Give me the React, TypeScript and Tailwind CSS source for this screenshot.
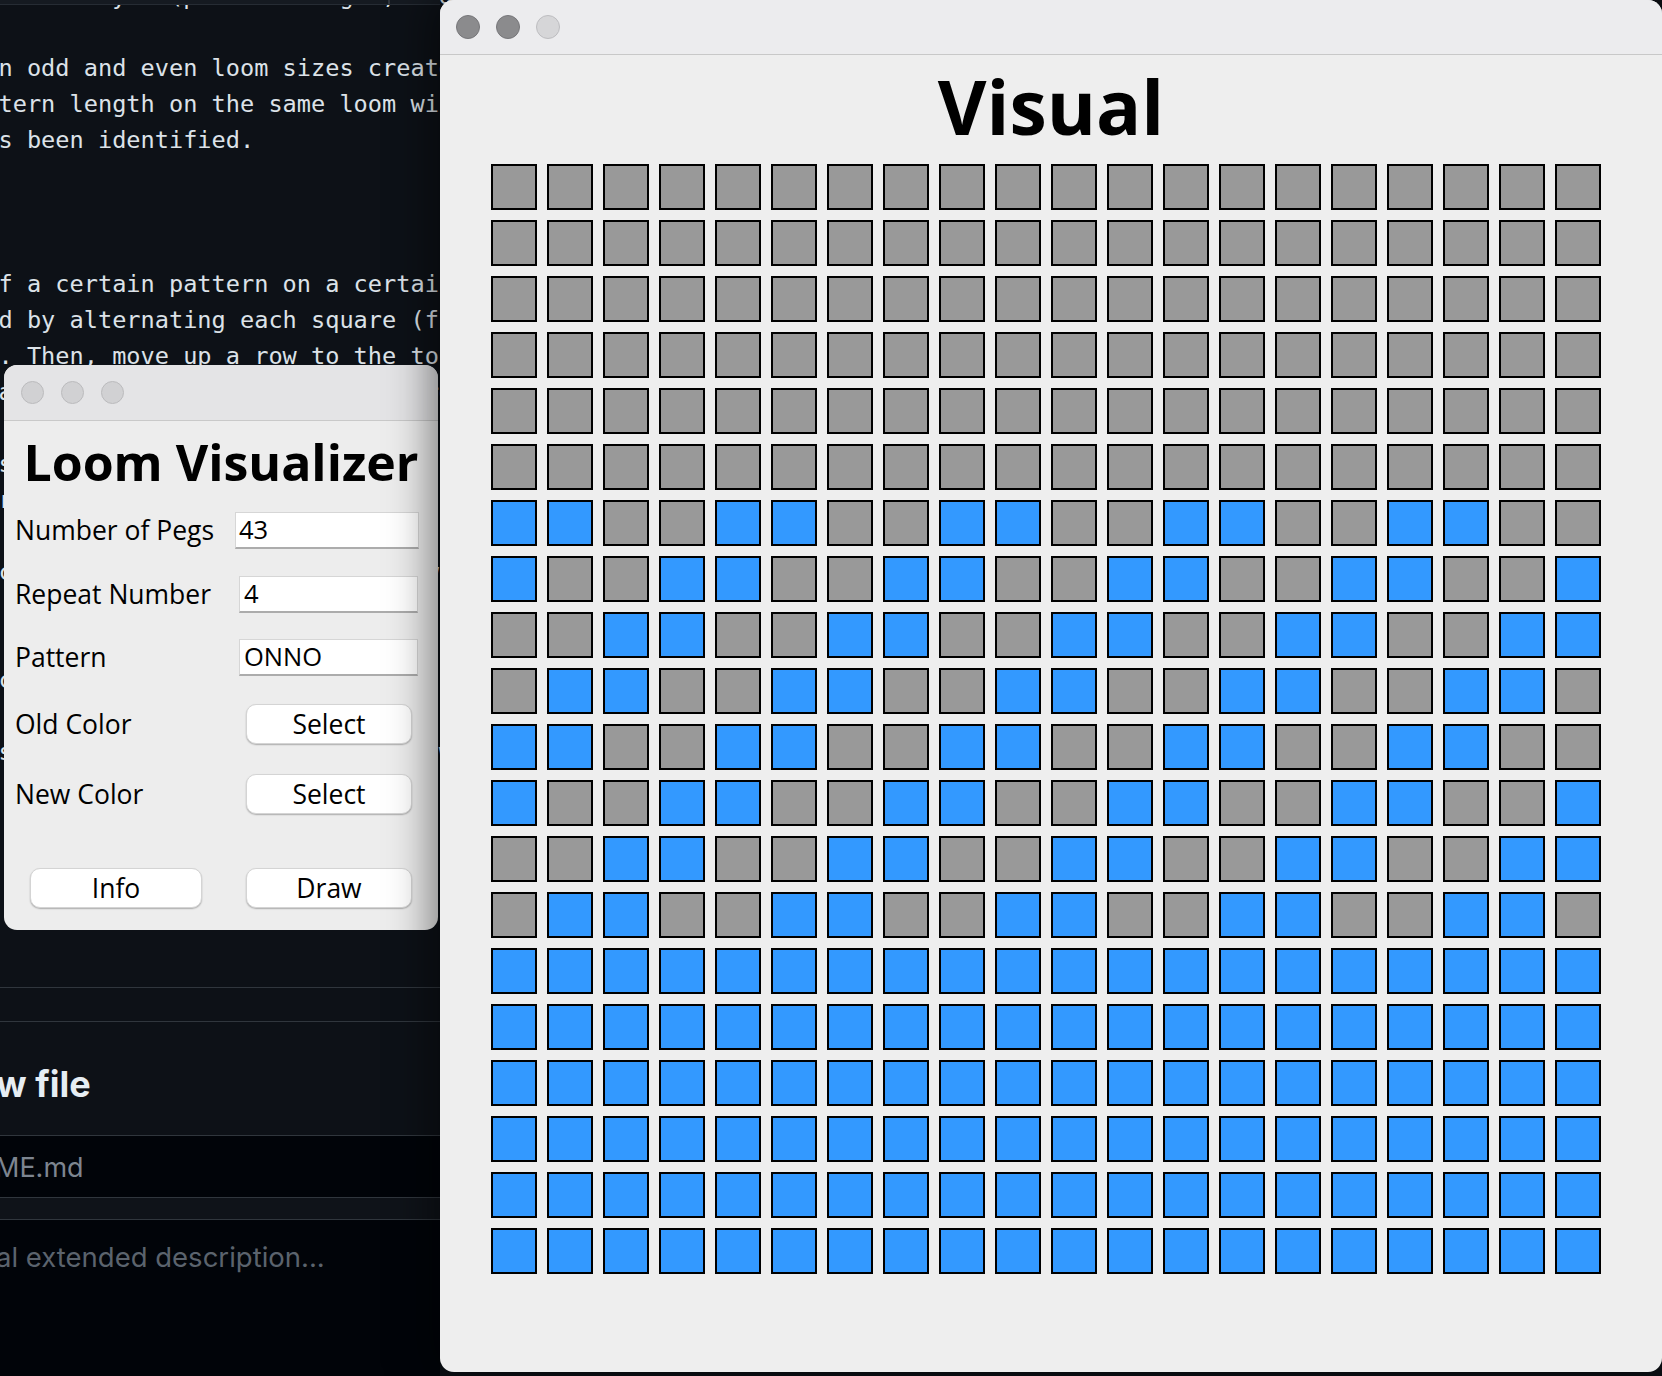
import React from "react";

const codeLines = [
  "ed in any 4 (pattern length, and so on the",
  "",
  "n odd and even loom sizes create different results",
  "tern length on the same loom will always match up",
  "s been identified.",
  "",
  "",
  "",
  "f a certain pattern on a certain loom size can be",
  "d by alternating each square (from left to right)",
  ". Then, move up a row to the top of the loom and",
  "a repeating pattern emerges across the whole loom.",
  "",
  "s the pattern size increases, the number of rows",
  "r needed grows as well, until the pattern repeats",
  "",
  "c olors are swapped on each row when drawn here",
  "",
  "",
  "c ount the pegs and the pattern length to check",
  "",
  "s o the result can be compared with the real loom",
  "",
  "",
  "",
];

// gray rows on top, the woven band, then blue rows
const grid = Array.from({ length: 20 }, (_, r) =>
  Array.from({ length: 20 }, (_, c) =>
    r < 6 ? false : r >= 14 ? true : (c + (r - 6)) % 4 < 2
  )
);

function Lights({ active }: { active: boolean }) {
  return (
    <>
      <div
        className={
          active
            ? "w-[24px] h-[24px] rounded-full bg-[#8b8b8d] border border-[#77777a]"
            : "w-[23px] h-[23px] rounded-full bg-[#d1d1d3] border border-[#bbbbbd]"
        }
      />
      <div
        className={
          active
            ? "w-[24px] h-[24px] rounded-full bg-[#8b8b8d] border border-[#77777a]"
            : "w-[23px] h-[23px] rounded-full bg-[#d1d1d3] border border-[#bbbbbd]"
        }
      />
      <div
        className={
          active
            ? "w-[24px] h-[24px] rounded-full bg-[#d6d6d8] border border-[#bdbdc0]"
            : "w-[23px] h-[23px] rounded-full bg-[#d1d1d3] border border-[#bbbbbd]"
        }
      />
    </>
  );
}

function MacButton({ label, className }: { label: string; className: string }) {
  return (
    <div
      className={`h-[40px] rounded-[10px] bg-white border border-[#d4d4d4] shadow-[0_1px_1.5px_rgba(0,0,0,0.28)] flex items-center justify-center text-[26.5px] leading-none text-black ${className}`}
    >
      {label}
    </div>
  );
}

export default function App() {
  return (
    <div className="relative w-[1662px] h-[1376px] overflow-hidden bg-[#0d1117]">
      {/* github page behind the windows */}
      <div className="w-[440px] flex flex-col">
        <div className="mt-[-22px] ml-[-1.5px] font-['DejaVu_Sans_Mono',monospace] text-[23.6px] leading-[36px] text-[#dce2e8] whitespace-pre">
          {codeLines.map((line, i) => (
            <div key={i} className="h-[36px]">
              {line}
            </div>
          ))}
        </div>
        <div className="mt-[109px] h-[35px] border-t border-b border-[#30363d]" />
        <div className="h-[114px] border-b border-[#30363d] pt-[44px] ml-[-4px] font-['Inter',sans-serif] text-[36px] leading-none font-bold text-[#e6edf3]">
          w file
        </div>
        <div className="h-[62px] bg-[#010409] border-b border-[#30363d] pt-[18px]">
          <div className="ml-[-5px] font-['Inter',sans-serif] text-[27px] leading-none text-[#7d8590]">
            ME.md
          </div>
        </div>
        <div className="h-[22px] bg-[#0f1319] border-b border-[#30363d]" />
        <div className="h-[160px] bg-[#010409] pt-[24px]">
          <div className="ml-[-4px] font-['Inter',sans-serif] text-[27.5px] leading-none text-[#5b636d]">
            al extended description...
          </div>
        </div>
      </div>

      {/* sticky header strip */}
      <div className="absolute top-0 left-0 w-[440px] h-[5px] bg-[#151a21] border-b border-[#262c34]">
        <div className="ml-[388px] w-[2px] h-[4px] bg-[#30363d]" />
      </div>

      {/* Loom Visualizer window */}
      <div className="absolute left-[4px] top-[365px] w-[434px] h-[565px] rounded-[13px] overflow-hidden bg-[#ededed] flex flex-col font-['Open_Sans',sans-serif] text-black">
        <div className="h-[56px] shrink-0 bg-[#e4e4e6] border-b border-[#c9c9c9] flex items-center pl-[16.5px] gap-[17px]">
          <Lights active={false} />
        </div>
        <div className="mt-[16px] text-center text-[50px] leading-none font-bold">
          Loom Visualizer
        </div>

        <div className="mt-[25px] h-[37px] flex items-center pl-[11px]">
          <span className="flex-1 text-[26.5px] leading-none">Number of Pegs</span>
          <div className="w-[184px] h-[37px] mr-[19px] bg-white border border-[#d6d6d6] border-b-2 border-b-[#acacac] flex items-center pl-[3px] text-[25.5px] leading-none">
            43
          </div>
        </div>
        <div className="mt-[27px] h-[37px] flex items-center pl-[11px]">
          <span className="flex-1 text-[26.5px] leading-none">Repeat Number</span>
          <div className="w-[179px] h-[37px] mr-[20px] bg-white border border-[#d6d6d6] border-b-2 border-b-[#acacac] flex items-center pl-[4px] text-[25.5px] leading-none">
            4
          </div>
        </div>
        <div className="mt-[26px] h-[37px] flex items-center pl-[11px]">
          <span className="flex-1 text-[26.5px] leading-none">Pattern</span>
          <div className="w-[179px] h-[37px] mr-[20px] bg-white border border-[#d6d6d6] border-b-2 border-b-[#acacac] flex items-center pl-[4px] text-[25.5px] leading-none">
            ONNO
          </div>
        </div>
        <div className="mt-[28px] h-[40px] flex items-center pl-[11px]">
          <span className="flex-1 text-[26.5px] leading-none">Old Color</span>
          <MacButton label="Select" className="w-[166px] mr-[26px]" />
        </div>
        <div className="mt-[30px] h-[40px] flex items-center pl-[11px]">
          <span className="flex-1 text-[26.5px] leading-none">New Color</span>
          <MacButton label="Select" className="w-[166px] mr-[26px]" />
        </div>
        <div className="mt-[54px] h-[40px] flex items-center justify-between">
          <MacButton label="Info" className="w-[172px] ml-[26px]" />
          <MacButton label="Draw" className="w-[166px] mr-[26px]" />
        </div>
      </div>

      {/* Visual window */}
      <div className="absolute left-[440px] top-0 w-[1222px] h-[1372px] rounded-[14px] overflow-hidden bg-[#eeeeee] shadow-[0_0_44px_8px_rgba(0,0,0,0.5)] flex flex-col">
        <div className="h-[55px] shrink-0 bg-[#ececee] border-b border-[#c8c8c8] flex items-center pl-[16px] gap-[16px]">
          <Lights active={true} />
        </div>
        <div className="mt-[14px] text-center font-['Open_Sans',sans-serif] text-[75px] leading-none font-bold text-black">
          Visual
        </div>
        <div className="mt-[20px] ml-[51px] grid grid-cols-[repeat(20,46px)] gap-[10px]">
          {grid.flat().map((blue, i) => (
            <div
              key={i}
              className={`w-[46px] h-[46px] border-2 border-black ${
                blue ? "bg-[#3399ff]" : "bg-[#999999]"
              }`}
            />
          ))}
        </div>
      </div>
    </div>
  );
}
